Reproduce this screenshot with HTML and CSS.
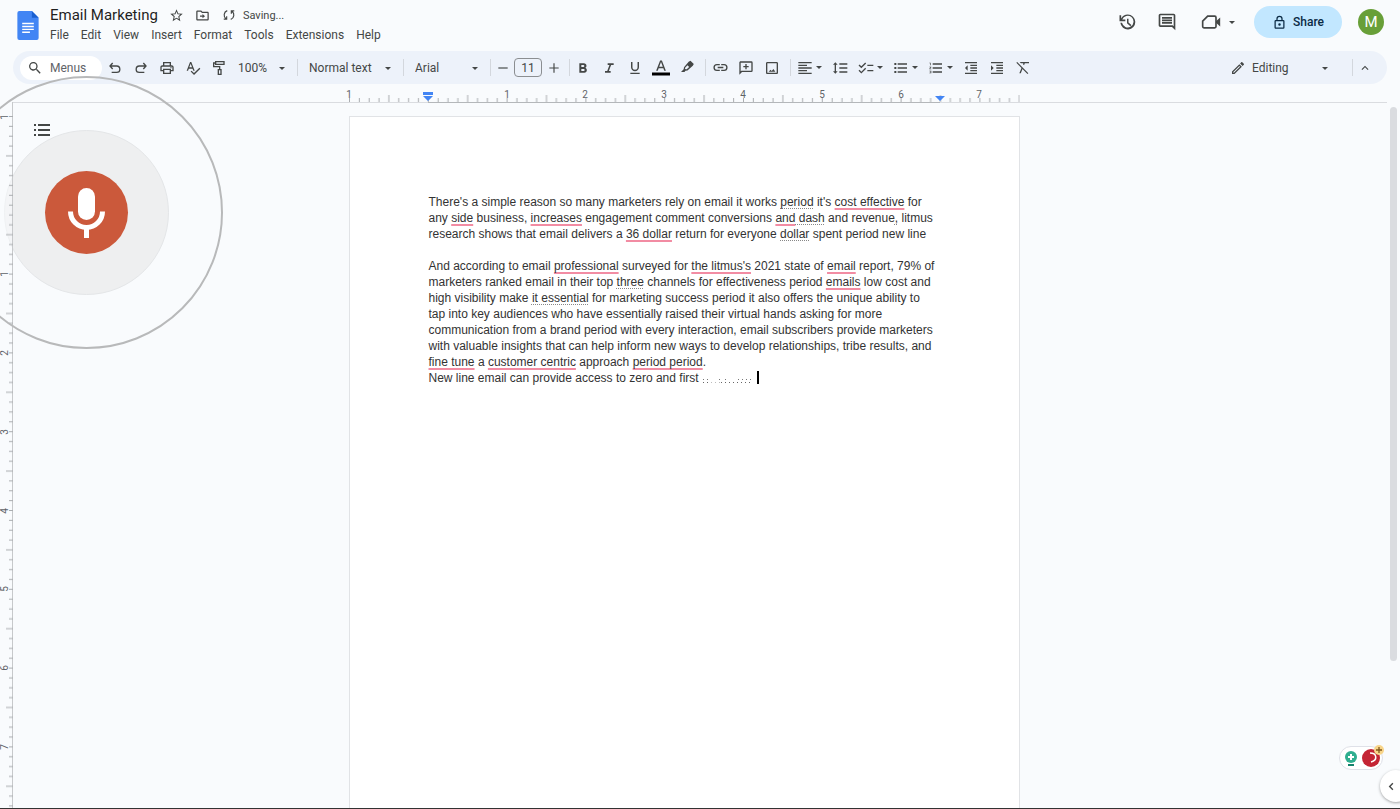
FILE: index.html
```html
<!DOCTYPE html>
<html lang="en">
<head>
<meta charset="utf-8">
<title>Email Marketing</title>
<link rel="stylesheet" href="styles.css">
</head>
<body>
<header class="header">
  <svg class="logo" viewBox="0 0 22 30"><path fill="#4285f4" d="M2 0h13l7 7v21a2 2 0 0 1-2 2H2a2 2 0 0 1-2-2V2a2 2 0 0 1 2-2z"/><path fill="#1a5fd0" d="M15 0l7 7h-7z"/><path stroke="#fff" stroke-width="1.5" d="M5 13h12M5 16h12M5 19h12M5 22h8"/></svg>
  <div class="heading">
    <div class="title-row">
      <h1 class="title">Email Marketing</h1>
      <button class="mini" aria-label="Star"><svg viewBox="0 0 24 24"><path d="M22 9.24l-7.19-.62L12 2 9.19 8.63 2 9.24l5.46 4.73L5.82 21 12 17.27 18.18 21l-1.63-7.03L22 9.24zM12 15.4l-3.76 2.27 1-4.28-3.32-2.88 4.38-.38L12 6.1l1.71 4.04 4.38.38-3.32 2.88 1 4.28L12 15.4z"/></svg></button>
      <button class="mini" aria-label="Move"><svg viewBox="0 0 24 24"><path d="M20 6h-8l-2-2H4c-1.100 0-2 .9-2 2v12c0 1.100.9 2 2 2h16c1.100 0 2-.9 2-2V8c0-1.100-.9-2-2-2zm0 12H4V6h5.200l2 2H20v10zM12 14v2.500l4-3.500-4-3.500V12H8v2h4z"/></svg></button>
      <span class="saving"><svg viewBox="0 0 24 24"><path fill="none" stroke="currentColor" stroke-width="2" d="M9 4.500a8 8 0 0 0-2 14M3 19h5v-5M15 19.500a8 8 0 0 0 2-14M21 5h-5v5"/></svg>Saving...</span>
    </div>
    <nav class="menus">
      <button>File</button><button>Edit</button><button>View</button><button>Insert</button><button>Format</button><button>Tools</button><button>Extensions</button><button>Help</button>
    </nav>
  </div>
  <div class="actions">
    <button class="action" aria-label="Version history"><svg viewBox="0 0 24 24"><path d="M13 3a9 9 0 0 0-8 4.860V4H3v7h7V9H6.300A7 7 0 1 1 6 13H4a9 9 0 1 0 9-10zm-1 5v5.400l4 3.600 1.300-1.400-3.500-3.100V8z"/></svg></button>
    <button class="action" aria-label="Comments"><svg viewBox="0 0 24 24"><path d="M22 4c0-1.100-.9-2-2-2H4c-1.100 0-2 .9-2 2v12c0 1.100.9 2 2 2h14l4 4V4zm-2 13.200L18.800 16H4V4h16v13.200zM6 12h12v2H6zm0-3h12v2H6zm0-3h12v2H6z"/></svg></button>
    <button class="action meet" aria-label="Join a call"><svg viewBox="0 0 24 24"><path fill="none" stroke="currentColor" stroke-width="2" d="M8 5h8.500c1 0 1.500.5 1.500 1.500v11c0 1-.5 1.500-1.500 1.500h-13C2.500 19 2 18.500 2 17.500V11z"/><path d="M18 11l5-4.500v11L18 13z"/></svg><i class="caret"></i></button>
    <button class="share"><svg viewBox="0 0 24 24"><path d="M18 8h-1V6A5 5 0 0 0 7 6v2H6a2 2 0 0 0-2 2v10c0 1.100.9 2 2 2h12a2 2 0 0 0 2-2V10a2 2 0 0 0-2-2zM9 6a3 3 0 0 1 6 0v2H9V6zm9 14H6V10h12v10zm-6-3a2 2 0 1 0 0-4 2 2 0 0 0 0 4z"/></svg>Share</button>
    <button class="avatar" aria-label="Account">M</button>
  </div>
</header>

<div class="toolbar" role="toolbar">
  <label class="search"><svg viewBox="0 0 24 24"><path d="M15.500 14h-.79l-.28-.27A6.500 6.500 0 1 0 13.730 14.430l.27.28v.79l5 5L20.500 19l-5-5zm-6 0a4.500 4.500 0 1 1 0-9 4.500 4.500 0 0 1 0 9z"/></svg><input type="text" placeholder="Menus" aria-label="Menus"></label>
  <div class="group">
    <button class="tool" aria-label="Undo"><svg viewBox="0 0 24 24"><path fill="none" stroke="currentColor" stroke-width="2" d="M8.500 4.500L4.500 9l4 4.500M5 9h9.500a4.700 4.700 0 0 1 0 9.500H7"/></svg></button>
    <button class="tool" aria-label="Redo"><svg viewBox="0 0 24 24"><path fill="none" stroke="currentColor" stroke-width="2" d="M15.500 4.500l4 4.500-4 4.500M19 9H9.500a4.700 4.700 0 0 0 0 9.500H17"/></svg></button>
    <button class="tool" aria-label="Print"><svg viewBox="0 0 24 24"><path d="M19 8h-1V3H6v5H5c-1.660 0-3 1.340-3 3v6h4v4h12v-4h4v-6c0-1.660-1.340-3-3-3zM8 5h8v3H8V5zm8 14H8v-4h8v4zm2-4v-2H6v2H4v-4c0-.55.45-1 1-1h14c.55 0 1 .45 1 1v4h-2z"/><circle cx="18" cy="11.500" r="1"/></svg></button>
    <button class="tool" aria-label="Spelling"><svg viewBox="0 0 24 24"><path d="M12.450 16h2.090L9.430 3H7.570L2.460 16h2.090l1.120-3h5.640l1.140 3zm-6.020-5L8.500 5.480 10.570 11H6.430zm15.160.59l-8.090 8.090L9.830 16l-1.410 1.410 5.090 5.090L23 13l-1.410-1.410z"/></svg></button>
    <button class="tool" aria-label="Paint format"><svg viewBox="0 0 24 24"><path fill="none" stroke="currentColor" stroke-width="2" d="M7 2.500h12.500v4H7zM7 4.500H4v5.500h9v4M11 14.500h4v7h-4z"/></svg></button>
  </div>
  <div class="pick zoom"><select aria-label="Zoom"><option>100%</option></select></div>
  <i class="sep"></i>
  <div class="pick style"><select aria-label="Styles"><option>Normal text</option></select></div>
  <i class="sep"></i>
  <div class="pick font"><select aria-label="Font"><option>Arial</option></select></div>
  <i class="sep"></i>
  <div class="size">
    <button class="step" aria-label="Decrease font size"><svg viewBox="0 0 24 24"><path d="M4 11h16v2H4z"/></svg></button>
    <input type="text" value="11" aria-label="Font size">
    <button class="step" aria-label="Increase font size"><svg viewBox="0 0 24 24"><path d="M4 11h7V4h2v7h7v2h-7v7h-2v-7H4z"/></svg></button>
  </div>
  <i class="sep"></i>
  <div class="group">
    <button class="tool" aria-label="Bold"><svg viewBox="0 0 24 24"><path d="M15.600 11.790c.97-.67 1.650-1.770 1.650-2.790C17.250 6.740 15.500 5 13.250 5H6.500v14h7.540c2.090 0 3.710-1.700 3.710-3.790 0-1.520-.86-2.820-2.150-3.420zM9.500 7.500h3a1.500 1.500 0 0 1 0 3h-3v-3zm3.500 9H9.500v-3H13a1.500 1.500 0 0 1 0 3z"/></svg></button>
    <button class="tool" aria-label="Italic"><svg viewBox="0 0 24 24"><path d="M10 5v2.500h2.700l-3.400 9H6V19h8.500v-2.500h-2.700l3.400-9H19V5z"/></svg></button>
    <button class="tool" aria-label="Underline"><svg viewBox="0 0 24 24"><path d="M12 17c3.310 0 6-2.690 6-6V3h-2.200v8a3.800 3.800 0 0 1-7.600 0V3H6v8c0 3.310 2.690 6 6 6zm-7 2v2h14v-2H5z"/></svg></button>
    <button class="tool" aria-label="Text color"><svg class="tall" viewBox="0 0 24 24"><path d="M10.800 2L5.500 15.500h2.200l1.150-3.200h6.300l1.150 3.200h2.200L13.200 2h-2.400zm-1.200 8.300L12 4l2.400 6.300z"/><path fill="#000" d="M0 18h24v4H0z"/></svg></button>
    <button class="tool" aria-label="Highlight color"><svg viewBox="0 0 24 24"><path fill-rule="evenodd" d="M14.500 2.700l2.700-1.700 5 5-1.500 2.700-8 7-3 .5-1.500 1.800H3l4-4 .5-3zM9.200 11.700l-.2 1.400 1.200.9 1.400-.2 3.600-3.400-2.400-2.400z"/></svg></button>
  </div>
  <i class="sep push"></i>
  <div class="group">
    <button class="tool" aria-label="Insert link"><svg class="wide" viewBox="0 0 24 24"><path d="M3.900 12A3.100 3.100 0 0 1 7 8.900h4V7H7a5 5 0 0 0 0 10h4v-1.900H7A3.100 3.100 0 0 1 3.900 12zM8 13h8v-2H8v2zm9-6h-4v1.900h4a3.100 3.100 0 0 1 0 6.200h-4V17h4a5 5 0 0 0 0-10z"/></svg></button>
    <button class="tool" aria-label="Add comment"><svg viewBox="0 0 24 24"><path fill-rule="evenodd" d="M4 2h16a2 2 0 0 1 2 2v12a2 2 0 0 1-2 2H6l-4 4V4c0-1.100.9-2 2-2zm0 2v13l1-1h15V4zM11 6h2v3h3v2h-3v3h-2v-3H8V9h3z"/></svg></button>
    <button class="tool" aria-label="Insert image"><svg viewBox="0 0 24 24"><path d="M19 5v14H5V5h14m0-2H5c-1.100 0-2 .9-2 2v14c0 1.100.9 2 2 2h14c1.100 0 2-.9 2-2V5c0-1.100-.9-2-2-2zm-4.860 10.500l-2.500 3L9.800 14.500 7 17.500h10z"/></svg></button>
  </div>
  <i class="sep push"></i>
  <div class="group">
    <button class="tool drop" aria-label="Align"><svg viewBox="0 0 24 24"><path d="M2 3h20v2H2zm0 4h13v2H2zm0 4h20v2H2zm0 4h13v2H2zm0 4h20v2H2z"/></svg><i class="caret"></i></button>
    <button class="tool" aria-label="Line spacing"><svg viewBox="0 0 24 24"><path d="M6 7h2.500L5 3.500 1.500 7H4v10H1.500L5 20.500 8.500 17H6V7zm5-2v2h12V5H11zm0 14h12v-2H11v2zm0-6h12v-2H11v2z"/></svg></button>
    <button class="tool drop" aria-label="Checklist"><svg viewBox="0 0 24 24"><path d="M14 7h9v2h-9zm0 8h9v2h-9z"/><path fill="none" stroke="currentColor" stroke-width="2" d="M1.500 7.500L5 11l6.500-6.500M1.500 15.500L5 19l6.500-6.500"/></svg><i class="caret"></i></button>
    <button class="tool drop" aria-label="Bulleted list"><svg viewBox="0 0 24 24"><path d="M7 5h14v2H7zm0 6h14v2H7zm0 6h14v2H7zM2 4.500h3v3H2zm0 6h3v3H2zm0 6h3v3H2z"/></svg><i class="caret"></i></button>
    <button class="tool drop" aria-label="Numbered list"><svg viewBox="0 0 24 24"><path d="M2 17h2v.5H3v1h1v.5H2v1h3v-4H2v1zm1-9h1V4H2v1h1v3zm-1 3h1.800L2 13.100v.9h3v-1H3.200L5 10.900V10H2v1zm5-6v2h14V5H7zm0 14h14v-2H7v2zm0-6h14v-2H7v2z"/></svg><i class="caret"></i></button>
    <button class="tool" aria-label="Decrease indent"><svg viewBox="0 0 24 24"><path d="M11 17h10v-2H11v2zm-8-5l4 4V8l-4 4zm0 9h18v-2H3v2zM3 3v2h18V3H3zm8 6h10V7H11v2zm0 4h10v-2H11v2z"/></svg></button>
    <button class="tool" aria-label="Increase indent"><svg viewBox="0 0 24 24"><path d="M3 21h18v-2H3v2zM3 8v8l4-4-4-4zm8 9h10v-2H11v2zM3 3v2h18V3H3zm8 6h10V7H11v2zm0 4h10v-2H11v2z"/></svg></button>
    <button class="tool" aria-label="Clear formatting"><svg viewBox="0 0 24 24"><path d="M21 5V3H6.900l2 2h3.600l-.5 1.400 1.600 1.600L14.700 5zM3.300 3L2 4.300l7.700 7.700L6.500 20h2.200l2.500-6.500 7.500 7.500 1.300-1.300z"/></svg></button>
  </div>
  <div class="mode">
    <svg viewBox="0 0 24 24"><path d="M14.060 9.020l.92.92L5.920 19H5v-.92l9.060-9.060M17.660 3c-.25 0-.51.1-.7.290l-1.830 1.830 3.750 3.750 1.830-1.830a1 1 0 0 0 0-1.410l-2.340-2.340c-.2-.2-.45-.29-.71-.29zm-3.600 3.190L3 17.250V21h3.750L17.810 9.940z"/></svg>
    <div class="pick editing"><select aria-label="Mode"><option>Editing</option></select></div>
    <i class="sep"></i>
    <button class="step" aria-label="Hide the menus"><svg viewBox="0 0 24 24"><path d="M12 8l-6 6 1.410 1.410L12 10.830l4.590 4.580L18 14z"/></svg></button>
  </div>
</div>

<main class="workspace">
  <aside class="vruler">
    <svg viewBox="0 0 13 720">
      <defs><pattern id="vt" width="13" height="80" patternUnits="userSpaceOnUse"><path stroke="#a8abae" d="M9 .5h4M9 10.500h4M9 20.500h4M9 30.500h4M6 40.500h7M9 50.500h4M9 60.500h4M9 70.500h4"/></pattern></defs>
      <g transform="scale(1 .985)"><rect width="13" height="730" fill="url(#vt)"/></g>
      <g class="vnum">
        <text transform="translate(8 1) rotate(-90)">1</text><text transform="translate(8 158) rotate(-90)">1</text><text transform="translate(8 237) rotate(-90)">2</text><text transform="translate(8 316) rotate(-90)">3</text><text transform="translate(8 395) rotate(-90)">4</text><text transform="translate(8 473) rotate(-90)">5</text><text transform="translate(8 552) rotate(-90)">6</text><text transform="translate(8 631) rotate(-90)">7</text>
      </g>
    </svg>
  </aside>
  <div class="canvas">
    <div class="hruler">
      <svg viewBox="0 0 671 18">
        <defs><pattern id="ht" width="80" height="18" patternUnits="userSpaceOnUse"><path stroke="#a8abae" d="M.5 14v4M10.500 14v4M20.500 14v4M30.500 14v4M40.500 11v7M50.500 14v4M60.500 14v4M70.500 14v4"/></pattern></defs>
        <g transform="scale(.985 1)"><rect width="681" height="18" fill="url(#ht)"/></g>
        <path stroke="#b4b7ba" d="M79 18.500h512"/>
        <g class="hnum"><text x="0" y="14">1</text><text x="158" y="14">1</text><text x="236" y="14">2</text><text x="315" y="14">3</text><text x="394" y="14">4</text><text x="473" y="14">5</text><text x="552" y="14">6</text><text x="630" y="14">7</text></g>
        <path fill="#4285f4" d="M74 8h10v3H74zM74 12h10l-5 5zM586 12h10l-5 5z"/>
      </svg>
    </div>
    <article class="page" role="textbox" aria-label="Document" contenteditable="true" spellcheck="false">
      <p>There's a simple reason so many marketers rely on email it works <u class="hint">period</u> it's <u>cost effective</u> for<br>any <u>side</u> business, <u>increases</u> engagement comment conversions <u>and</u><u class="hint"> dash</u> and revenue<u class="hint">,</u> litmus<br>research shows that email delivers a <u>36 dollar</u> return for everyone <u class="hint">dollar</u> spent period new line</p>
      <p>And according to email <u>professional</u> surveyed for <u>the litmus's</u> 2021 state of <u>email</u> report, 79% of<br>marketers ranked email in their top <u class="hint">three</u> channels for effectiveness period <u>emails</u> low cost and<br>high visibility make <u class="hint">it essential</u> for marketing success period it also offers the unique ability to<br>tap into key audiences who have essentially raised their virtual hands asking for more<br>communication from a brand period with every interaction, email subscribers provide marketers<br>with valuable insights that can help inform new ways to develop relationships, tribe results, and<br><u>fine tune</u> a <u>customer centric</u> approach <u>period period</u>.<br>New line email can provide access to zero and first <svg class="dots" viewBox="0 0 50 8"><path stroke="#777" stroke-dasharray="1 3" d="M1 3.500h6M17 3.500h2M23 3.500h2M36 3.500h14"/><path stroke="#666" stroke-dasharray="1 3" d="M1 6.500h6M19 6.500h31"/><path stroke="#bbb" stroke-dasharray="1 3" d="M9 6.500h9"/></svg><span class="cursor"></span></p>
    </article>
    <button class="outline" aria-label="Show outline"><svg viewBox="0 0 16 14"><path d="M0 1h2v2H0zM4 1h12v2H4zM0 6h2v2H0zM4 6h12v2H4zM0 11h2v2H0zM4 11h12v2H4z"/></svg></button>
  </div>
  <div class="scroll"></div>
</main>

<div class="halo"></div>
<div class="ring"></div>
<button class="mic" aria-label="Voice typing"><svg viewBox="0 0 37 50"><rect x="10" y="0" width="17" height="32" rx="8.500" fill="#fff"/><path fill="none" stroke="#fff" stroke-width="5" d="M2.500 23.500a16 16 0 0 0 32 0M18.500 39v11"/></svg></button>

<div class="assist">
  <svg viewBox="0 0 46 28">
    <circle cx="12" cy="14" r="6" fill="#2fae8f"/><path stroke="#fff" stroke-width="2" d="M12 11v6M9 14h6"/><path stroke="#16836c" stroke-width="2" d="M9 22h6"/>
    <circle cx="32" cy="15" r="9" fill="#c42434"/><path fill="none" stroke="#fff" stroke-width="1.500" d="M31 10c7 0 8 7 1 9"/>
    <circle cx="40" cy="7" r="5" fill="#f8d58a"/><path stroke="#80571a" stroke-width="1.300" d="M40 4v6M37 7h6"/>
  </svg>
</div>
<button class="sidetab" aria-label="Show side panel"><svg viewBox="0 0 24 24"><path fill="none" stroke="currentColor" stroke-width="3" d="M15 5l-7 7 7 7"/></svg></button>
</body>
</html>
```
FILE: styles.css
```css
* { box-sizing: border-box; }
body {
  margin: 0;
  height: 100vh;
  display: flex;
  flex-direction: column;
  position: relative;
  overflow: hidden;
  background: #f9fbfd;
  border-bottom: 1px solid #333;
  font-family: Roboto, "Liberation Sans", sans-serif;
  font-size: 12px;
  color: #444746;
}
button, input, select { font: inherit; color: inherit; border: 0; background: none; padding: 0; margin: 0; }
button { display: flex; align-items: center; justify-content: center; }
svg { display: block; fill: currentColor; flex: none; }

.header { display: flex; height: 51px; padding: 0 16px; flex: none; }
.logo { width: 22px; height: 29px; margin: 11px 11px 0 1px; }
.heading { padding-top: 5px; }
.title-row { display: flex; align-items: center; height: 20px; }
.title { margin: 0 11px 0 0; font-size: 15px; font-weight: 400; line-height: 20px; color: #1f1f1f; }
.mini { width: 16px; height: 16px; margin-right: 10px; }
.mini svg { width: 15px; height: 15px; }
.saving { display: flex; align-items: center; gap: 7px; padding-left: 1px; font-size: 11px; }
.saving svg { width: 14px; height: 14px; }
.menus { display: flex; gap: 12px; height: 20px; }

.actions { display: flex; align-items: center; height: 44px; margin-left: auto; }
.action { width: 20px; height: 24px; margin-right: 20px; }
.action svg { width: 20px; height: 20px; }
.meet { width: 36px; gap: 8px; margin: 0 17px 0 4px; justify-content: flex-start; }
.share { gap: 6px; width: 88px; height: 32px; margin-right: 16px; border-radius: 16px; background: #c2e7ff; color: #0b2b45; font-weight: 500; }
.share svg { width: 15px; height: 15px; }
.avatar { width: 26px; height: 26px; border-radius: 50%; background: #689f38; color: #fff; font-size: 15px; }

.caret { flex: none; border: 3px solid transparent; border-top-color: currentColor; border-bottom: 0; }

.toolbar { display: flex; align-items: center; flex: none; height: 33px; margin: 0 13px; padding-left: 7px; border-radius: 17px; background: #edf2fa; }
.search { display: flex; align-items: center; gap: 7px; width: 82px; height: 24px; padding-left: 7px; border-radius: 12px; background: #fff; }
.search svg { width: 16px; height: 16px; }
.search input { width: 48px; }
.search input::placeholder { color: #5f6368; opacity: 1; }
.group { display: flex; }
.tool { width: 26px; height: 26px; }
.tool svg { width: 16px; height: 16px; }
.tool .tall { width: 18px; height: 18px; }
.tool .wide { width: 17px; height: 17px; }
.drop { width: 35px; gap: 3px; justify-content: flex-start; padding-left: 5px; }
.pick { position: relative; }
.pick::after { content: ""; position: absolute; right: 12px; top: 50%; margin-top: -1px; border: 3px solid transparent; border-top-color: currentColor; border-bottom: 0; pointer-events: none; }
.pick select { appearance: none; width: 100%; height: 24px; padding-left: 11px; }
.pick.zoom select { padding-left: 6px; }
.zoom { width: 65px; }
.style { width: 105px; }
.font { width: 86px; }
.sep { flex: none; width: 1px; height: 17px; background: #d3d7dd; }
.push { margin: 0 1px 0 5px; }
.size { display: flex; align-items: center; margin: 0 4px 0 0; }
.size input { width: 28px; height: 19px; border: 1px solid #8b8e91; border-radius: 4px; text-align: center; }
.step { width: 23px; height: 24px; }
.step svg { width: 14px; height: 14px; }
.mode { display: flex; align-items: center; margin-left: auto; padding-right: 11px; }
.mode > svg { width: 16px; height: 16px; }
.editing { width: 104px; margin-right: 2px; }
.pick.editing select { padding-left: 6px; }
.editing::after { right: 22px; }

.workspace { display: flex; flex: 1; min-height: 0; }
.vruler { position: relative; z-index: 2; flex: none; width: 13px; margin-top: 18px; padding-top: 14px; border-right: 1px solid #c7c9cb; background: rgba(249, 251, 253, .5); }
.vruler svg { width: 13px; height: 720px; overflow: visible; }
.vnum text, .hnum text { font-size: 10px; text-anchor: middle; fill: #5f6368; }
.canvas { flex: 1; min-width: 0; position: relative; display: flex; flex-direction: column; align-items: center; }
.hruler { display: flex; justify-content: center; align-self: stretch; height: 19px; padding-right: 32px; border-bottom: 1px solid #dadce0; }
.hruler svg { width: 671px; height: 18px; overflow: visible; }
.page { flex: 1; width: 671px; margin: 13px 32px 0 0; padding: 77px 78px 77px 79px; background: #fff; border: 1px solid #e1e3e6; border-bottom: 0; font-family: "Liberation Sans", Arial, sans-serif; line-height: 16px; color: #333; white-space: nowrap; }
.page p { margin: 0 0 16px; }
.page u { text-decoration: underline 2px #f28ca3; text-underline-offset: 2px; text-decoration-skip-ink: none; }
.page .hint { text-decoration: underline dotted 1px #888; }
.dots { display: inline-block; width: 50px; height: 8px; vertical-align: -2px; }
.cursor { display: inline-block; width: 2px; height: 13px; margin-left: 5px; background: #000; vertical-align: -2px; }
.outline { position: absolute; z-index: 3; left: 21px; top: 39px; width: 16px; height: 14px; }
.outline svg { width: 16px; height: 14px; }
.scroll { flex: none; width: 7px; height: 554px; margin: 23px 3px 0 3px; border-radius: 4px; background: #dadce0; }

.halo, .ring, .mic { position: absolute; border-radius: 50%; }
.halo { z-index: 1; left: 4px; top: 130px; width: 165px; height: 165px; background: rgba(60, 50, 40, .06); border: 1px solid #e4e6e8; }
.ring { z-index: 4; left: -50px; top: 76px; width: 273px; height: 273px; border: 2px solid #b8b9ba; pointer-events: none; }
.mic { z-index: 3; left: 45px; top: 171px; width: 83px; height: 83px; background: #cb593b; }
.mic svg { width: 37px; height: 50px; }

.assist { position: absolute; right: 17px; bottom: 38px; width: 44px; height: 24px; border: 1px solid #dfe1e8; border-radius: 12px; background: #fff; }
.assist svg { width: 46px; height: 28px; margin: -4px 0 0 -1px; }
.sidetab { position: absolute; right: -12px; bottom: 6px; width: 32px; height: 32px; padding-right: 9px; border-radius: 50%; background: #fff; box-shadow: 0 1px 3px rgba(0, 0, 0, .35); }
.sidetab svg { width: 11px; height: 11px; }
```
